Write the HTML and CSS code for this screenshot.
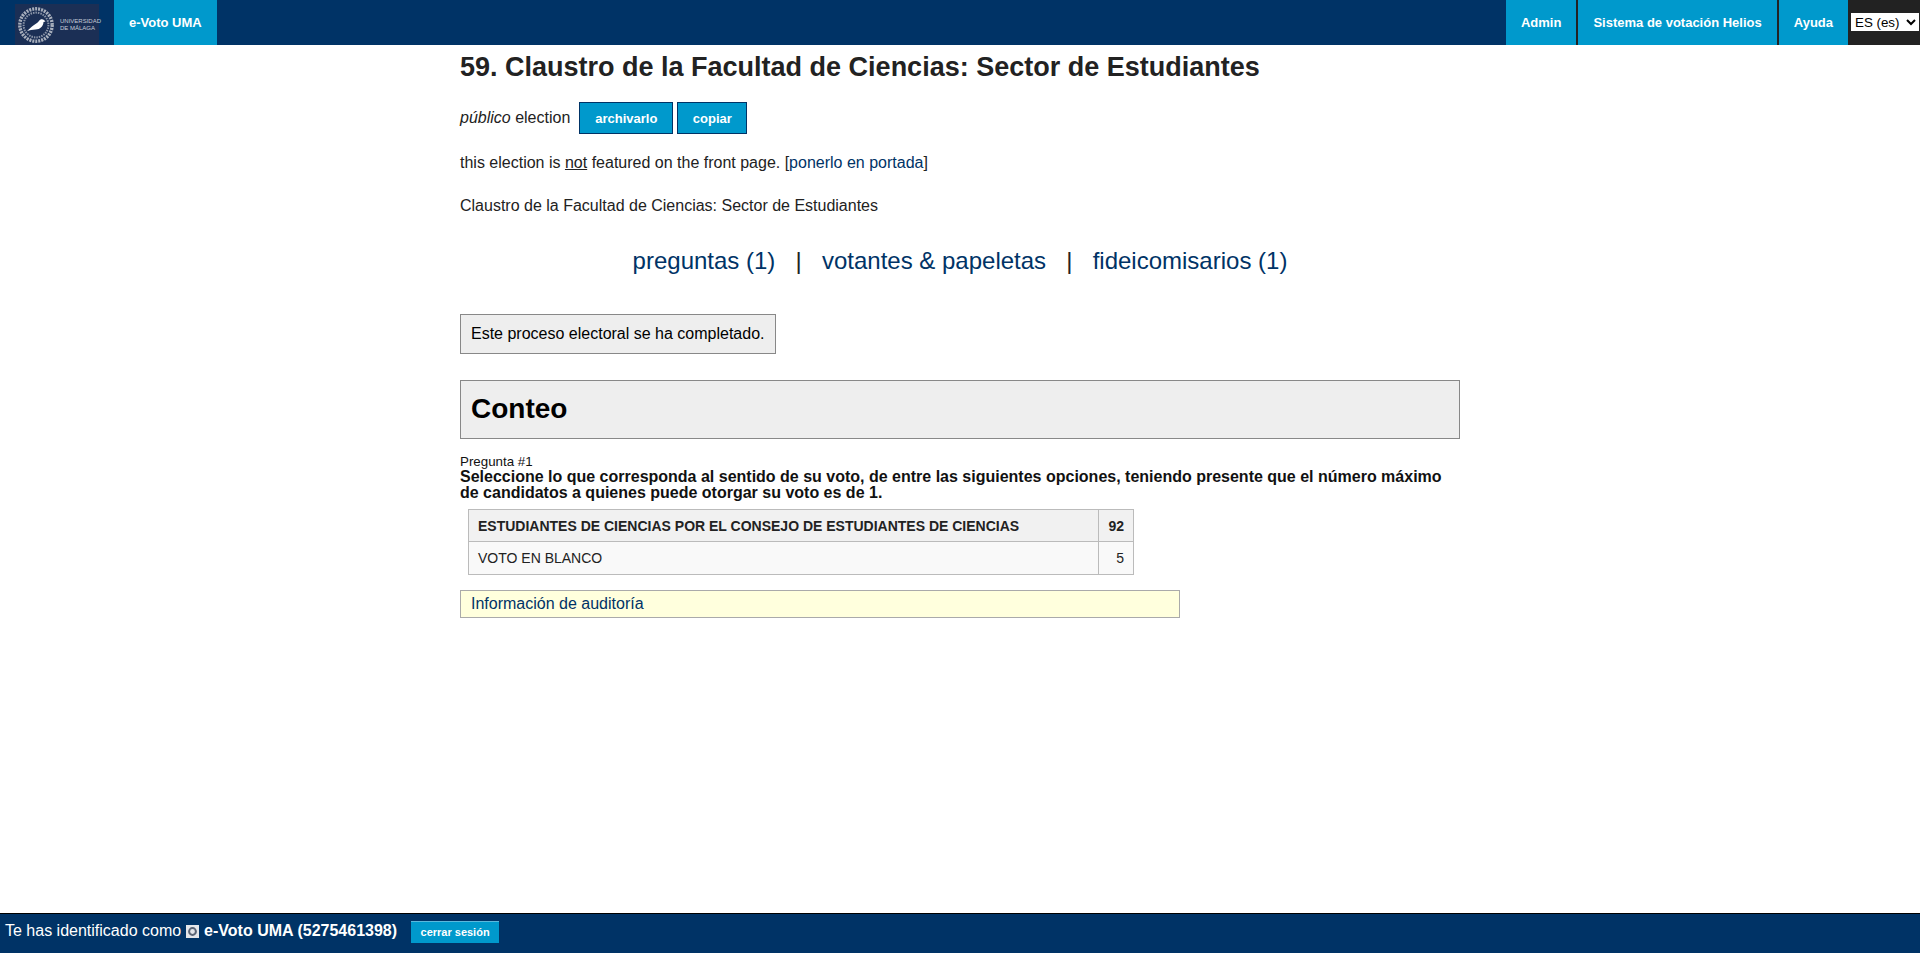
FILE: index.html
```html
<!DOCTYPE html>
<html lang="es">
<head>
<meta charset="utf-8">
<title>e-Voto UMA</title>
<link rel="stylesheet" href="styles.css">
</head>
<body>
<header class="topbar">
  <div class="logo">
    <svg class="seal" width="38" height="38" viewBox="0 0 38 38" aria-hidden="true">
      <circle cx="19" cy="19" r="16.2" fill="none" stroke="#a9b0bd" stroke-width="3.4" stroke-dasharray="2 1"/>
      <circle cx="19" cy="19" r="12.4" fill="none" stroke="#8b95a8" stroke-width="2" stroke-dasharray="1.5 1"/>
      <path d="M10 25 L15 20.5 C17 18.5 20 17.5 22 15 C23 13 25.5 12.5 27 14 L28.5 15.5 L26.5 16 C26.5 20 23 23.5 18.5 23.5 L14 24 Z" fill="#fff"/>
    </svg>
    <span class="logo-text">UNIVERSIDAD<br>DE MÁLAGA</span>
  </div>
  <a class="tab brand" href="#">e-Voto UMA</a>
  <nav class="right-nav">
    <a class="tab" href="#">Admin</a>
    <a class="tab" href="#">Sistema de votación Helios</a>
    <a class="tab" href="#">Ayuda</a>
    <div class="lang">
      <select class="lang-select"><option>ES (es)</option></select>
    </div>
  </nav>
</header>

<main class="content">
  <h1 class="title">59. Claustro de la Facultad de Ciencias: Sector de Estudiantes</h1>
  <div class="status-row">
    <span><em>público</em> election</span>
    <a class="btn" href="#">archivarlo</a>
    <a class="btn btn-copy" href="#">copiar</a>
  </div>
  <p class="featured">this election is <u>not</u> featured on the front page. [<a href="#">ponerlo en portada</a>]</p>
  <p class="desc">Claustro de la Facultad de Ciencias: Sector de Estudiantes</p>
  <div class="links">
    <a href="#">preguntas (1)</a>
    <span class="sep">|</span>
    <a href="#">votantes &amp; papeletas</a>
    <span class="sep">|</span>
    <a href="#">fideicomisarios (1)</a>
  </div>
  <div class="notice">Este proceso electoral se ha completado.</div>
  <h2 class="tally-head">Conteo</h2>
  <div class="q-label">Pregunta #1</div>
  <div class="q-text">Seleccione lo que corresponda al sentido de su voto, de entre las siguientes opciones, teniendo presente que el número máximo de candidatos a quienes puede otorgar su voto es de 1.</div>
  <table class="results">
    <tr class="winner"><td>ESTUDIANTES DE CIENCIAS POR EL CONSEJO DE ESTUDIANTES DE CIENCIAS</td><td class="num">92</td></tr>
    <tr class="other"><td>VOTO EN BLANCO</td><td class="num">5</td></tr>
  </table>
  <div class="audit"><a href="#">Información de auditoría</a></div>
</main>

<footer class="footer">
  <span>Te has identificado como</span>
  <svg class="user-icon" width="13" height="13" viewBox="0 0 13 13" aria-hidden="true">
    <rect width="13" height="13" fill="#e4e6ea"/>
    <circle cx="6.5" cy="6.5" r="3.4" fill="none" stroke="#5a6475" stroke-width="2"/>
  </svg>
  <b>e-Voto UMA (5275461398)</b>
  <a class="btn-logout" href="#">cerrar sesión</a>
</footer>
</body>
</html>
```
FILE: styles.css
```css
* { box-sizing: border-box; }
html, body { margin: 0; padding: 0; }
body {
  min-height: 957px;
  display: flex;
  flex-direction: column;
  font-family: "Liberation Sans", Arial, sans-serif;
  font-size: 16px;
  color: #222;
  background: #fff;
}
a { color: #003366; text-decoration: none; }

.topbar {
  display: flex;
  height: 45px;
  background: #003366;
  flex: none;
}
.logo {
  width: 84px;
  height: 41px;
  margin: 4px 15px 0 15px;
  background: #1b2f55;
  display: flex;
  align-items: center;
  color: #c6ccd6;
  flex: none;
}
.seal { margin-left: 2px; flex: none; }
.logo-text {
  font-size: 6px;
  line-height: 7px;
  margin-left: 5px;
  white-space: nowrap;
}
.tab {
  display: flex;
  align-items: center;
  padding: 0 15px;
  background: #0099cc;
  color: #fff;
  font-size: 13px;
  font-weight: bold;
  height: 45px;
}
.right-nav {
  display: flex;
  margin-left: auto;
  gap: 2px;
  background: #222;
}
.lang {
  width: 72px;
  margin-left: -2px;
  padding: 13px 0 0 3px;
  background: #222;
}
.lang-select {
  display: block;
  width: 68px;
  height: 18px;
  padding: 0;
  border: 0;
  font-family: "Liberation Sans", Arial, sans-serif;
  font-size: 13.33px;
  background: #fff;
  color: #000;
}

.content {
  width: 1000px;
  margin: 0 auto;
  flex: 1;
}
.title {
  margin: 8px 0 0;
  font-size: 27px;
  line-height: 28px;
  font-weight: bold;
}
.status-row {
  display: flex;
  align-items: center;
  margin-top: 21px;
  height: 32px;
}
.btn {
  display: flex;
  align-items: center;
  justify-content: center;
  height: 32px;
  width: 94px;
  margin-left: 9px;
  background: #0099cc;
  border: 1px solid #003366;
  color: #fff;
  font-size: 13px;
  font-weight: bold;
}
.btn-copy { width: 70px; margin-left: 4px; }
.featured { margin: 19px 0 0; line-height: 20px; }
.desc { margin: 23px 0 0; line-height: 20px; }
.links {
  margin-top: 31px;
  text-align: center;
  font-size: 24px;
  line-height: 28px;
}
.sep { margin: 0 13.5px; }
.notice {
  width: fit-content;
  margin-top: 39px;
  padding: 10px;
  border: 1px solid #888;
  background: #eee;
  color: #000;
  line-height: 18px;
}
.tally-head {
  margin: 26px 0 0;
  padding: 14px 10px;
  height: 59px;
  border: 1px solid #888;
  background: #eee;
  color: #000;
  font-size: 28px;
  line-height: 28px;
  font-weight: bold;
}
.q-label {
  margin-top: 16px;
  color: #111;
  font-size: 13.33px;
  line-height: 14px;
}
.q-text {
  color: #111;
  font-size: 16px;
  line-height: 16px;
  font-weight: bold;
}
.results {
  margin: 8px 0 0 8px;
  width: 666px;
  border-collapse: collapse;
  font-size: 14px;
}
.results td {
  padding: 0 9px;
  border: 1px solid #bbb;
}
.winner td { height: 32px; background: #f1f1f1; font-weight: bold; }
.other td { height: 33px; background: #f9f9f9; }
.num { width: 33px; text-align: right; }
.audit {
  width: 720px;
  height: 28px;
  margin-top: 15px;
  padding: 0 10px;
  border: 1px solid #aaa;
  background: #ffffdd;
  line-height: 25px;
}

.footer {
  display: flex;
  align-items: center;
  flex: none;
  height: 40px;
  margin-bottom: 4px;
  padding: 0 0 5px 5px;
  background: #003366;
  border-top: 1px solid #000;
  color: #fff;
  font-size: 16px;
}
.user-icon { margin: 0 5px; flex: none; }
.btn-logout {
  display: flex;
  align-items: center;
  justify-content: center;
  width: 88px;
  height: 22px;
  margin: 1px 0 0 14px;
  background: #0099cc;
  border-top: 1px solid #5bb8dc;
  color: #fff;
  font-size: 11px;
  font-weight: bold;
}
```
